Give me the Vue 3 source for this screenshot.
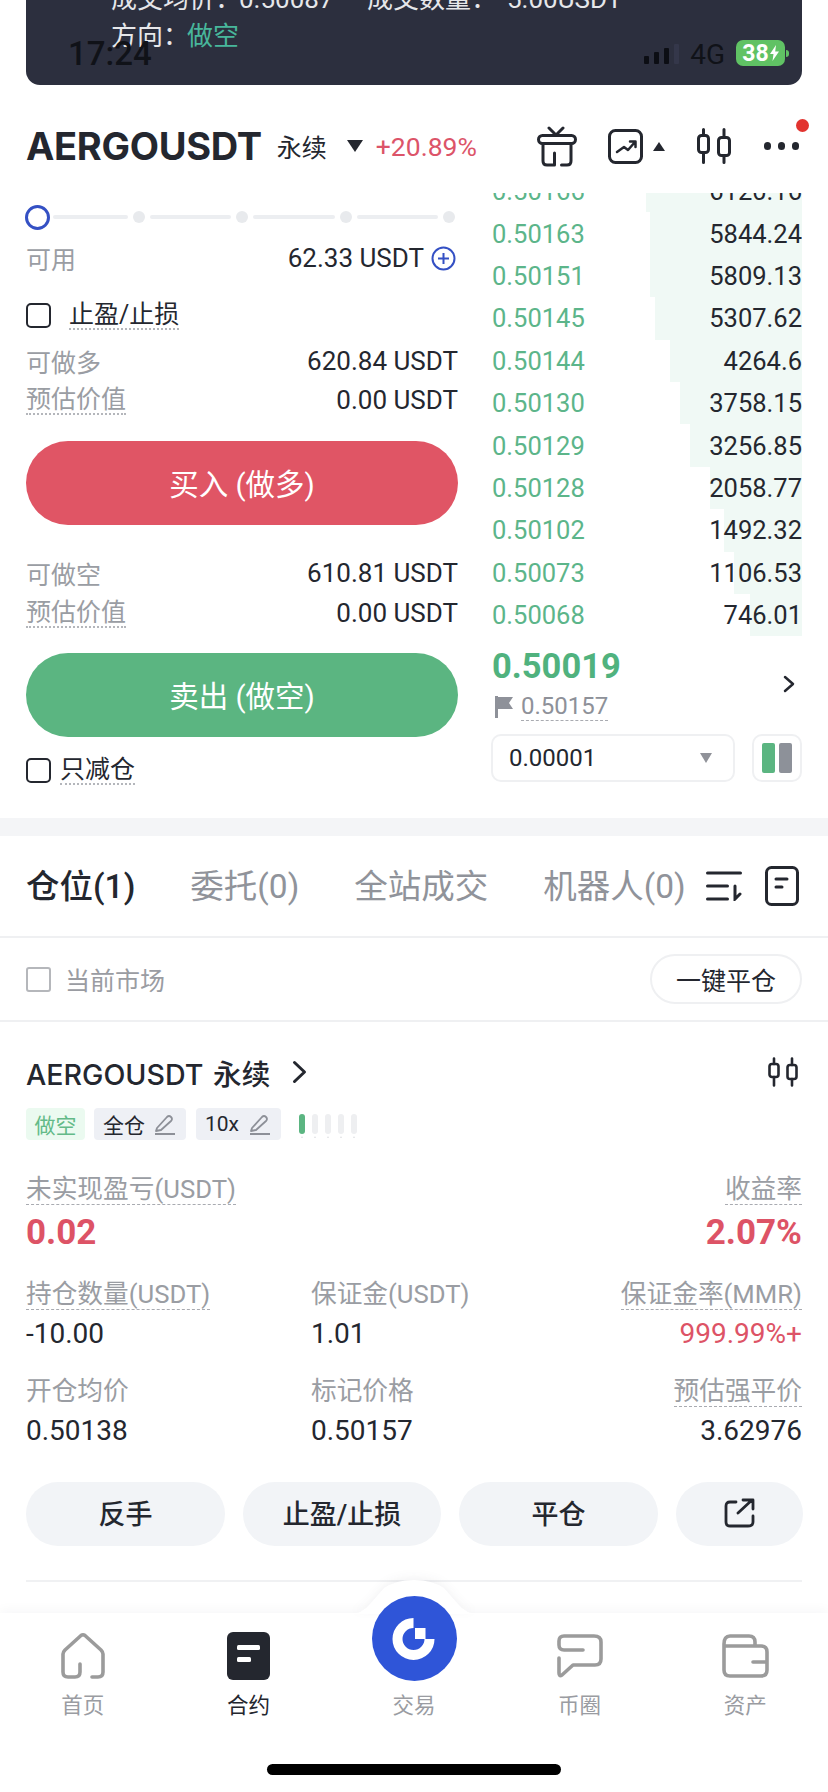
<template>
  <div class="app">
    <!-- system status bar sits over the toast -->
    <div class="status">
      <span class="status__time">17:24</span>
      <div class="status__right">
        <div class="signal">
          <i style="height: 8px" />
          <i style="height: 12px" />
          <i style="height: 16px" />
          <i class="signal__off" style="height: 20px" />
        </div>
        <span class="status__net">4G</span>
        <div class="battery">
          <span>38</span>
          <svg width="9" height="16" viewBox="0 0 9 16"><path d="M6 0 0 9h3.500L2.500 16 9 6.500H5.200z" fill="#fff" /></svg>
        </div>
        <i class="battery__nub" />
      </div>
    </div>

    <div class="toast">
      <div class="toast__line toast__line--first">
        <span class="toast__a">成交均价：</span><span class="toast__b">0.50087</span>
        <span class="toast__c">成交数量：</span><span>5.00USDT</span>
      </div>
      <div class="toast__line">方向：<span class="toast__side">做空</span></div>
    </div>

    <header class="head">
      <h1 class="head__title">AERGOUSDT</h1>
      <span class="head__type">永续</span>
      <i class="tri tri--down" />
      <span class="head__change">+20.89%</span>
      <div class="head__icons">
        <svg class="ic-gift" width="40" height="41" viewBox="0 0 40 41" fill="none" stroke="#24272f" stroke-width="3" stroke-linecap="round" stroke-linejoin="round">
          <rect x="1.500" y="9.500" width="37" height="8" rx="4" />
          <path d="M12 2l7 7 7-7M6 18v17q0 4 4 4h7.500V27M24.500 39H30q4 0 4-4V18" />
        </svg>
        <svg class="ic-chart" width="35" height="35" viewBox="0 0 35 35" fill="none" stroke="#24272f" stroke-width="3" stroke-linecap="round" stroke-linejoin="round">
          <rect x="1.500" y="1.500" width="32" height="32" rx="6" />
          <path d="M9 23l7-5 4 3 7-8M22 12.500h5.500V18" stroke-width="2.500" />
        </svg>
        <i class="tri tri--up" />
        <svg class="ic-candle" width="34" height="36" viewBox="0 0 34 36" fill="none" stroke="#24272f" stroke-width="3" stroke-linecap="round">
          <rect x="1.500" y="7.500" width="10" height="17" rx="3" />
          <rect x="21.500" y="9.500" width="11" height="18" rx="3" />
          <path d="M6.500 1.500v6M6.500 25v9.500M27 1.500v8M27 28v6.500" />
        </svg>
        <div class="dots"><i /><i /><i /></div>
      </div>
      <i class="head__badge" />
    </header>

    <main class="trade">
      <section class="form">
        <div class="slider">
          <i class="slider__knob" />
          <template v-for="n in 4" :key="n">
            <i class="slider__line" :class="{ 'slider__line--first': n === 1 }" />
            <i class="slider__tick" />
          </template>
        </div>

        <div class="row row--avail">
          <span class="muted">可用</span>
          <span class="avail">62.33 USDT
            <svg width="25" height="25" viewBox="0 0 25 25" fill="none" stroke="#3450c4" stroke-width="2"><circle cx="12.500" cy="12.500" r="11" /><path d="M12.500 7v11M7 12.500h11" /></svg>
          </span>
        </div>

        <div class="check check--tp">
          <i class="box" />
          <span class="dash">止盈/止损</span>
        </div>

        <div class="row row--first"><span class="muted">可做多</span><span>620.84 USDT</span></div>
        <div class="row"><span class="muted dash">预估价值</span><span>0.00 USDT</span></div>
        <button class="bigbtn bigbtn--buy">买入 (做多)</button>

        <div class="row row--second"><span class="muted">可做空</span><span>610.81 USDT</span></div>
        <div class="row row--est"><span class="muted dash">预估价值</span><span>0.00 USDT</span></div>
        <button class="bigbtn bigbtn--sell">卖出 (做空)</button>

        <div class="check check--reduce">
          <i class="box" />
          <span class="dash">只减仓</span>
        </div>
      </section>

      <section class="book">
        <div class="book__rows">
          <div v-for="r in bookRows" :key="r.price" class="book__row">
            <i class="book__depth" :style="{ width: r.depth + 'px' }" />
            <span class="book__price">{{ r.price }}</span>
            <span class="book__qty">{{ r.qty }}</span>
          </div>
        </div>

        <div class="last">
          <div>
            <div class="last__price">0.50019</div>
            <div class="last__mark">
              <svg width="18" height="22" viewBox="0 0 18 22"><path d="M0 0h3v22H0zM3 1h15l-4 6 4 6H3z" fill="#8e9199" /></svg>
              <span class="dash dash--thin">0.50157</span>
            </div>
          </div>
          <svg class="last__go" width="12" height="18" viewBox="0 0 12 18" fill="none" stroke="#24272f" stroke-width="2.500" stroke-linecap="round" stroke-linejoin="round"><path d="M2 2l8 7-8 7" /></svg>
        </div>

        <div class="controls">
          <div class="select">
            <span>0.00001</span>
            <i class="tri tri--gray" />
          </div>
          <div class="layout">
            <i class="layout__green" />
            <i class="layout__gray" />
          </div>
        </div>
      </section>
    </main>

    <div class="band" />

    <nav class="tabs">
      <span class="tab tab--on">仓位(1)</span>
      <span class="tab">委托(0)</span>
      <span class="tab">全站成交</span>
      <span class="tab">机器人(0)</span>
      <svg class="tabs__sort" width="36" height="30" viewBox="0 0 36 30" fill="none" stroke="#24272f" stroke-width="3" stroke-linecap="round">
        <path d="M1.500 2h33M1.500 15h20M1.500 28h20M29 15v13l5-5" />
      </svg>
      <svg class="tabs__list" width="34" height="40" viewBox="0 0 34 40" fill="none" stroke="#24272f" stroke-width="3" stroke-linecap="round">
        <rect x="1.500" y="1.500" width="31" height="37" rx="5" />
        <path d="M11 13h11M11 21h6" />
      </svg>
    </nav>

    <div class="filter">
      <label class="filter__check"><i class="box box--gray" />当前市场</label>
      <button class="filter__btn">一键平仓</button>
    </div>

    <article class="pos">
      <div class="pos__title">
        <span>AERGOUSDT 永续</span>
        <svg width="15" height="24" viewBox="0 0 15 24" fill="none" stroke="#24272f" stroke-width="3" stroke-linecap="round" stroke-linejoin="round"><path d="M2.500 2.500 12.500 12l-10 9.500" /></svg>
        <svg class="pos__candle" width="30" height="30" viewBox="0 0 30 30" fill="none" stroke="#24272f" stroke-width="2.600" stroke-linecap="round">
          <rect x="1.500" y="7" width="9" height="13" rx="2.500" />
          <rect x="19.500" y="8" width="9" height="14" rx="2.500" />
          <path d="M6 1.500V7M6 20v8.500M24 1.500V8M24 22v6.500" />
        </svg>
      </div>

      <div class="tags">
        <span class="tag tag--short">做空</span>
        <span class="tag tag--edit">全仓
          <svg width="22" height="21" viewBox="0 0 22 21" fill="none" stroke="#8d9098" stroke-width="1.800" stroke-linejoin="round"><path d="M3 14 13 3q2-2 4 0t0 4L7 16l-5 1zM1 20h20" /></svg>
        </span>
        <span class="tag tag--edit tag--lev">10x
          <svg width="22" height="21" viewBox="0 0 22 21" fill="none" stroke="#8d9098" stroke-width="1.800" stroke-linejoin="round"><path d="M3 14 13 3q2-2 4 0t0 4L7 16l-5 1zM1 20h20" /></svg>
        </span>
        <div class="adl">
          <i v-for="n in 5" :key="n" :class="{ 'adl__on': n === 1 }" />
        </div>
      </div>

      <div class="pnl">
        <div>
          <div class="label"><span class="dash dash--thin">未实现盈亏(USDT)</span></div>
          <div class="pnl__val">0.02</div>
        </div>
        <div class="right">
          <div class="label"><span class="dash dash--thin">收益率</span></div>
          <div class="pnl__val">2.07%</div>
        </div>
      </div>

      <div class="stats">
        <div v-for="s in stats" :key="s.label" class="stat" :class="{ right: s.right }">
          <div class="label"><span :class="{ 'dash dash--thin': s.dash }">{{ s.label }}</span></div>
          <div class="stat__val" :class="{ 'stat__val--red': s.red }">{{ s.value }}</div>
        </div>
      </div>

      <div class="actions">
        <button class="action">反手</button>
        <button class="action">止盈/止损</button>
        <button class="action">平仓</button>
        <button class="action action--share">
          <svg width="32" height="30" viewBox="0 0 32 30" fill="none" stroke="#24272f" stroke-width="2.800" stroke-linecap="round" stroke-linejoin="round">
            <path d="M12 4H6Q2 4 2 8v16q0 4 4 4h18q5 0 5-4v-6M14 15 28 2M19 2h10v9" />
          </svg>
        </button>
      </div>
    </article>

    <div class="rule" />

    <footer class="nav">
      <svg class="nav__bump" width="160" height="36" viewBox="0 0 160 36"><path d="M0 36h16q12 0 20-10L50 10Q62 2 80 2t30 8l14 16q8 10 20 10h16z" fill="#fff" /></svg>
      <div class="nav__item">
        <svg width="44" height="48" viewBox="0 0 44 48" fill="none" stroke="#9b9b9b" stroke-width="3.600" stroke-linecap="round" stroke-linejoin="round">
          <path d="M31 45h6q5 0 5-5V22q0-2-2-4L24 3.500q-2-1.500-4 0L4 18q-2 2-2 4v18q0 5 5 5h7q5 0 5-5v-8" />
        </svg>
        <span>首页</span>
      </div>
      <div class="nav__item nav__item--on">
        <svg width="43" height="48" viewBox="0 0 43 48"><rect width="43" height="48" rx="6" fill="#24272f" /><rect x="10" y="13" width="23" height="5" rx="1.500" fill="#fff" /><rect x="10" y="25" width="14" height="5" rx="1.500" fill="#fff" /></svg>
        <span>合约</span>
      </div>
      <div class="nav__item">
        <div class="nav__spacer" />
        <span>交易</span>
      </div>
      <div class="nav__item">
        <svg width="48" height="48" viewBox="0 0 48 48" fill="none" stroke="#9b9b9b" stroke-width="3.600" stroke-linecap="round" stroke-linejoin="round">
          <path d="M27 18H8q-5 0-5-5V9q0-5 5-5h30q7 0 7 6v17q0 6-6 6H17L6 43q-3 2-3-2V26" />
        </svg>
        <span>币圈</span>
      </div>
      <div class="nav__item">
        <svg width="48" height="48" viewBox="0 0 48 48" fill="none" stroke="#9b9b9b" stroke-width="3.600" stroke-linecap="round" stroke-linejoin="round">
          <path d="M3 12V38q0 6 6 6h31q6 0 6-6V20q0-6-6-6h-6v-4q0-6-6-6H9q-6 0-6 8zM3 14h31M32 30h14" />
        </svg>
        <span>资产</span>
      </div>

      <div class="nav__trade">
        <svg width="85" height="85" viewBox="0 0 85 85">
          <circle cx="42.500" cy="42.500" r="42.500" fill="#2f55d8" />
          <path d="M41.500 27A16 16 0 1 0 57.500 43" fill="none" stroke="#fff" stroke-width="10" />
          <rect x="43" y="32" width="10.500" height="11" fill="#fff" />
        </svg>
      </div>
      <i class="nav__home" />
    </footer>
  </div>
</template>

<script setup>
const bookRows = [
  { price: "0.50166", qty: "6120.16", depth: 156 },
  { price: "0.50163", qty: "5844.24", depth: 152 },
  { price: "0.50151", qty: "5809.13", depth: 152 },
  { price: "0.50145", qty: "5307.62", depth: 147 },
  { price: "0.50144", qty: "4264.6", depth: 132 },
  { price: "0.50130", qty: "3758.15", depth: 122 },
  { price: "0.50129", qty: "3256.85", depth: 112 },
  { price: "0.50128", qty: "2058.77", depth: 92 },
  { price: "0.50102", qty: "1492.32", depth: 78 },
  { price: "0.50073", qty: "1106.53", depth: 68 },
  { price: "0.50068", qty: "746.01", depth: 52 }
]

const stats = [
  { label: "持仓数量(USDT)", value: "-10.00", dash: true },
  { label: "保证金(USDT)", value: "1.01" },
  { label: "保证金率(MMR)", value: "999.99%+", dash: true, right: true, red: true },
  { label: "开仓均价", value: "0.50138" },
  { label: "标记价格", value: "0.50157" },
  { label: "预估强平价", value: "3.62976", dash: true, right: true }
]
</script>

<style>
html,
body {
  margin: 0;
  background: #fff;
}
</style>

<style scoped>
.app {
  position: relative;
  width: 828px;
  height: 1792px;
  overflow: hidden;
  background: #fff;
  color: #24272f;
  font-family: Roboto, "Noto Sans CJK SC", sans-serif;
}

button {
  border: 0;
  padding: 0;
  font-family: inherit;
  color: inherit;
}

i {
  display: block;
  font-style: normal;
}

/* status bar */
.status {
  position: absolute;
  top: 38px;
  left: 68px;
  right: 39px;
  height: 32px;
  display: flex;
  justify-content: space-between;
  align-items: center;
  color: #101218;
  z-index: 3;
}

.status__time {
  font-size: 33px;
  font-weight: 500;
  line-height: 34px;
}

.status__right {
  display: flex;
  align-items: center;
  height: 32px;
  margin-top: -2px;
}

.signal {
  display: flex;
  align-items: flex-end;
  gap: 4.500px;
  margin-top: 2px;
  height: 20px;
}

.signal i {
  width: 5.500px;
  border-radius: 1px;
  background: #0c0e14;
}

.signal .signal__off {
  background: #34374a;
}

.status__net {
  margin-left: 11px;
  margin-top: 4px;
  font-size: 28px;
  line-height: 32px;
}

.battery {
  margin-left: 11px;
  width: 49px;
  height: 26px;
  border-radius: 7px;
  background: #60c264;
  color: #fff;
  font-size: 23px;
  font-weight: 700;
  display: flex;
  align-items: center;
  justify-content: center;
  gap: 1px;
}

.battery__nub {
  width: 3px;
  height: 7px;
  margin-left: 1px;
  border-radius: 0 3px 3px 0;
  background: #60c264;
}

/* toast */
.toast {
  margin: 0 26px;
  height: 85px;
  padding-left: 85px;
  overflow: hidden;
  box-sizing: border-box;
  background: #2c2f3e;
  border-radius: 0 0 14px 14px;
  color: #e6e7ea;
  font-size: 26px;
}

.toast__line {
  line-height: 37px;
  white-space: nowrap;
}

.toast__line--first {
  margin-top: -19px;
  display: flex;
}

.toast__a {
  width: 128px;
}

.toast__b {
  width: 128px;
}

.toast__c {
  width: 140px;
}

.toast__side {
  color: #48b79b;
  margin-left: -2px;
}

/* header */
.head {
  position: relative;
  height: 108px;
  padding: 14px 26px 0;
  box-sizing: border-box;
  display: flex;
  align-items: center;
}

.head__title {
  margin: 0;
  font-family: Inter, "Noto Sans CJK SC", sans-serif;
  font-size: 38px;
  font-weight: 700;
  letter-spacing: -0.3px;
}

.head__type {
  margin-left: 15px;
  font-size: 25px;
}

.tri {
  width: 0;
  height: 0;
  border-style: solid;
  border-color: transparent;
}

.tri--down {
  margin-left: 20px;
  border-width: 12px 8.500px 0;
  border-top-color: #24272f;
}

.tri--up {
  margin-left: 10px;
  border-width: 0 6px 9px;
  border-bottom-color: #24272f;
}

.tri--gray {
  border-width: 10px 6.500px 0;
  border-top-color: #909299;
}

.head__change {
  margin-left: 13px;
  font-size: 26.500px;
  color: #dc5469;
}

.head__icons {
  margin-left: auto;
  margin-right: 3px;
  display: flex;
  align-items: center;
}

.ic-chart {
  margin-left: 31px;
}

.ic-candle {
  margin-left: 32px;
}

.dots {
  margin-left: 33px;
  display: flex;
  gap: 6.500px;
}

.dots i {
  width: 7.500px;
  height: 7.500px;
  border-radius: 50%;
  background: #24272f;
}

.head__badge {
  position: absolute;
  left: 796px;
  top: 34px;
  width: 13px;
  height: 13px;
  border-radius: 50%;
  background: #e2332f;
}

/* trade area */
.trade {
  height: 625px;
  padding: 0 26px;
  display: flex;
  gap: 32px;
  font-size: 26px;
}

.form {
  width: 432px;
  flex: none;
}

.slider {
  width: 429px;
  margin-top: 12px;
  height: 24px;
  display: flex;
  align-items: center;
  gap: 5px;
}

.slider__knob {
  width: 25px;
  height: 25px;
  margin-left: -1px;
  margin-right: -2px;
  box-sizing: border-box;
  border: 3px solid #3450c4;
  border-radius: 50%;
  flex: none;
}

.slider__line {
  flex: 1;
  height: 4px;
  border-radius: 2px;
  background: #eceef1;
}

.slider__line--first {
  flex: 0 0 75px;
}

.slider__tick {
  width: 12px;
  height: 12px;
  border-radius: 50%;
  background: #e8eaed;
  flex: none;
}

.row {
  height: 38px;
  display: flex;
  justify-content: space-between;
  align-items: center;
}

.row .muted {
  font-size: 25px;
}

.row--avail {
  margin-top: 12px;
  height: 34px;
}

.row--first {
  margin-top: 9px;
  height: 40px;
}

.row--second {
  margin-top: 29px;
}

.row--est {
  margin-top: 2px;
}

.muted {
  color: #9a9da3;
}

.avail {
  display: flex;
  align-items: center;
  gap: 7px;
  margin-right: 2px;
}

.dash {
  border-bottom: 2.500px dotted #b4b6bb;
  line-height: 27px;
}

.dash--thin {
  border-bottom-width: 1.500px;
  border-bottom-style: dashed;
  border-bottom-color: #a9abb1;
}

.check {
  display: flex;
  align-items: center;
  height: 34px;
  font-size: 25px;
}

.check--tp {
  margin-top: 23px;
  gap: 18px;
}

.check--reduce {
  margin-top: 16px;
  gap: 9px;
}

.box {
  width: 25px;
  height: 25px;
  box-sizing: border-box;
  border: 2.500px solid #24272f;
  border-radius: 5px;
}

.box--gray {
  border-color: #b5b7bb;
  border-width: 2px;
  border-radius: 3px;
}

.bigbtn {
  display: block;
  width: 100%;
  height: 84px;
  padding-bottom: 3px;
  border-radius: 42px;
  color: #fff;
  font-size: 29.500px;
  font-weight: 400;
}

.bigbtn--buy {
  margin-top: 22px;
  background: #e05565;
}

.bigbtn--sell {
  margin-top: 21px;
  background: #5bb581;
}

/* order book */
.book {
  flex: 1;
  min-width: 0;
}

.book__rows {
  height: 443px;
  overflow: hidden;
}

.book__row {
  position: relative;
  height: 42.400px;
  display: flex;
  justify-content: space-between;
  align-items: center;
  font-size: 25.500px;
}

.book__row:first-child {
  margin-top: -23px;
}

.book__depth {
  position: absolute;
  top: 0;
  right: 0;
  bottom: 0;
  background: #f0f9f5;
}

.book__price {
  position: relative;
  margin-left: 2px;
  color: #5cb58a;
}

.book__qty {
  position: relative;
}

.last {
  margin-top: 10px;
  padding-left: 2px;
  display: flex;
  justify-content: space-between;
  align-items: center;
}

.last__price {
  height: 40px;
  line-height: 40px;
  font-size: 34.500px;
  font-weight: 700;
  color: #50b27e;
}

.last__mark {
  margin-top: 6px;
  height: 30px;
  padding-left: 3px;
  display: flex;
  align-items: center;
  gap: 8px;
  font-size: 24px;
  color: #8e9199;
}

.last__go {
  margin-right: 7px;
}

.controls {
  margin-top: 12px;
  padding-left: 1px;
  display: flex;
  justify-content: space-between;
}

.select {
  width: 244px;
  height: 48px;
  padding: 0 21px 0 16px;
  box-sizing: border-box;
  border: 2px solid #eff0f2;
  border-radius: 10px;
  display: flex;
  justify-content: space-between;
  align-items: center;
  font-size: 24px;
}

.layout {
  width: 50px;
  height: 48px;
  box-sizing: border-box;
  border: 2px solid #eff0f2;
  border-radius: 10px;
  display: flex;
  justify-content: center;
  align-items: center;
  gap: 4px;
}

.layout i {
  width: 13px;
  height: 30px;
  border-radius: 2px;
}

.layout__green {
  background: #5bb581;
}

.layout .layout__gray {
  background: #8d9199;
}

.band {
  height: 18px;
  background: #f4f5f7;
}

/* tabs */
.tabs {
  height: 100px;
  padding: 0 30px 0 26px;
  border-bottom: 2px solid #eff0f2;
  display: flex;
  align-items: center;
  gap: 55px;
}

.tab {
  margin-top: -6px;
  font-size: 33.500px;
  color: #90939a;
  white-space: nowrap;
}

.tab--on {
  color: #24272f;
  font-weight: 500;
}

.tabs__sort {
  margin-left: -35px;
  flex: none;
}

.tabs__list {
  margin-left: -32px;
  flex: none;
}

.filter {
  height: 82px;
  padding: 0 26px;
  border-bottom: 2px solid #eff0f2;
  display: flex;
  justify-content: space-between;
  align-items: center;
}

.filter__check {
  display: flex;
  align-items: center;
  gap: 14px;
  font-size: 25px;
  color: #9a9ca2;
}

.filter__btn {
  width: 152px;
  height: 50px;
  box-sizing: border-box;
  border: 2px solid #eff0f2;
  border-radius: 25px;
  background: #fff;
  font-size: 25px;
}

/* position card */
.pos {
  padding: 30px 26px 0;
}

.pos__title {
  position: relative;
  height: 40px;
  display: flex;
  align-items: center;
  gap: 22px;
  font-family: Inter, "Noto Sans CJK SC", sans-serif;
  font-size: 28.600px;
  font-weight: 500;
  word-spacing: 2px;
}

.pos__candle {
  margin-left: auto;
  margin-right: 4px;
}

.tags {
  margin-top: 16px;
  height: 32px;
  display: flex;
  align-items: center;
  gap: 9px;
  font-size: 21px;
}

.tag {
  height: 32px;
  border-radius: 4px;
  display: flex;
  align-items: center;
  box-sizing: border-box;
}

.tag--short {
  width: 59px;
  justify-content: center;
  background: #ebfaf0;
  color: #63ba88;
}

.tag--edit {
  width: 92px;
  padding: 0 10px 0 9px;
  justify-content: space-between;
  background: #eef0f5;
}

.tag--lev {
  width: 85px;
  margin-left: 1px;
}

.adl {
  position: relative;
  margin-left: 9px;
  display: flex;
  gap: 7px;
}

.adl i {
  width: 6px;
  height: 20px;
  border-radius: 3px;
  background: #eeeff1;
  box-shadow: 0 5px 0 -2px #fff, 0 6px 0 -2px #dfe0e3;
}

.adl .adl__on {
  background: #5bb581;
}

.label {
  height: 30px;
  line-height: 31px;
  font-size: 25.700px;
  color: #9a9da3;
}

.pnl {
  margin-top: 34px;
  display: flex;
  justify-content: space-between;
}

.pnl__val {
  margin-top: 9px;
  height: 40px;
  line-height: 40px;
  font-size: 35px;
  font-weight: 700;
  color: #dd5366;
}

.right {
  text-align: right;
}

.stats {
  margin-top: 26px;
  display: grid;
  grid-template-columns: 285px 1fr 1fr;
  row-gap: 24px;
}

.stat__val {
  margin-top: 7px;
  height: 36px;
  line-height: 36px;
  font-size: 28px;
}

.stat__val--red {
  color: #dd5366;
}

.actions {
  margin-top: 33px;
  display: grid;
  grid-template-columns: 199px 198px 199px 127px;
  gap: 18px;
}

.action {
  height: 64px;
  padding-bottom: 3px;
  border-radius: 32px;
  background: #f2f4f7;
  font-size: 27px;
  font-weight: 500;
  display: flex;
  justify-content: center;
  align-items: center;
}

.rule {
  margin: 34px 26px 0;
  height: 2px;
  background: #f0f1f3;
}

/* bottom nav */
.nav {
  position: relative;
  margin-top: 31px;
  height: 179px;
  padding-top: 19px;
  box-sizing: border-box;
  background: #fff;
  box-shadow: 0 -4px 10px rgba(30, 35, 50, 0.03);
  display: grid;
  grid-template-columns: repeat(5, 1fr);
  align-items: start;
}

.nav__bump {
  position: absolute;
  left: 334px;
  top: -35px;
  filter: drop-shadow(0 -3px 4px rgba(30, 35, 50, 0.05));
}

.nav__item {
  position: relative;
  display: flex;
  flex-direction: column;
  align-items: center;
  gap: 11px;
  font-size: 21.500px;
  color: #9a9ca2;
}

.nav__item span {
  height: 30px;
  line-height: 30px;
}

.nav__item--on {
  color: #24272f;
}

.nav__spacer {
  height: 48px;
}

.nav__trade {
  position: absolute;
  left: 372px;
  top: -17px;
  width: 85px;
  height: 85px;
}

.nav__home {
  position: absolute;
  left: 267px;
  bottom: 17px;
  width: 294px;
  height: 11px;
  border-radius: 6px;
  background: #000;
}
</style>
